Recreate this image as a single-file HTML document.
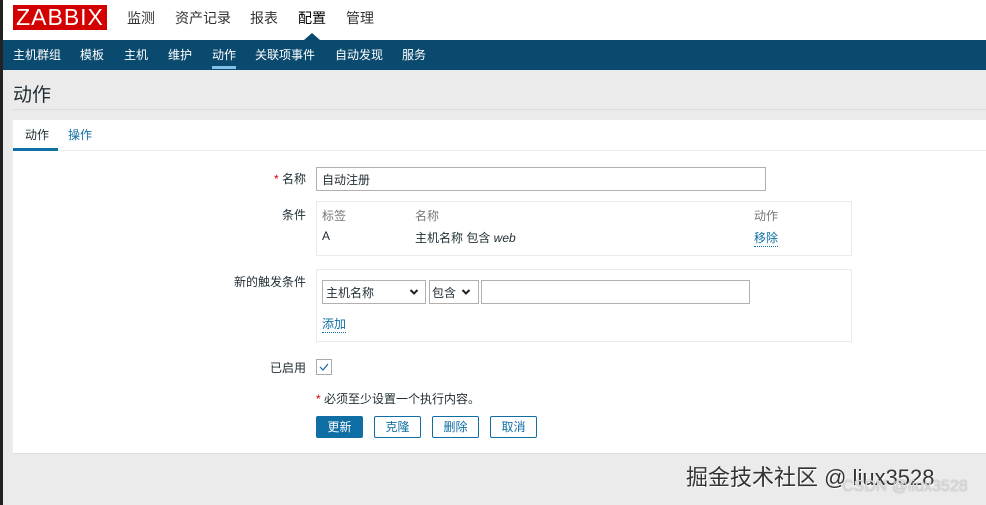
<!DOCTYPE html>
<html><head><meta charset="utf-8"><style>
*{box-sizing:border-box;margin:0;padding:0}
body{width:986px;height:505px;overflow:hidden;background:#ebebeb;font-family:"Liberation Sans","Noto Sans CJK SC",sans-serif;font-size:12px;color:#1f2c33;position:relative}
.edge{position:absolute;left:0;top:0;width:3px;height:505px;background:#222}
.top{position:absolute;left:3px;top:0;width:983px;height:40px;background:#fff}
.logo{position:absolute;left:13px;top:5px;width:94px;height:25px;background:#d40000;color:#fff;font-size:23px;line-height:25px;text-align:center;letter-spacing:1px}
.mm{position:absolute;top:8px;font-size:14px;color:#333}
.nav{position:absolute;left:3px;top:40px;width:983px;height:30px;background:#0b4a6f}
.nav span{position:absolute;top:6px;color:#fff;font-size:12px}
.tri{position:absolute;left:304px;top:33px;width:0;height:0;border-left:8px solid transparent;border-right:8px solid transparent;border-bottom:7px solid #0b4a6f}
.h1{position:absolute;left:13px;top:80px;font-size:19px;color:#1f2c33}
.hl{position:absolute;left:13px;top:109px;width:973px;height:1px;background:#dcdcdc}
.box{position:absolute;left:13px;top:120px;width:973px;height:334px;background:#fff;border-bottom:1px solid #dcdcdc}
.tab{position:absolute;top:126px;font-size:12px}
.lbl{position:absolute;font-size:12px;right:680px;text-align:right}
.inp{position:absolute;border:1px solid #b0b0b0;background:#fff}
.grp{position:absolute;border:1px solid #ebebeb}
.t{position:absolute;font-size:12px}
.lnk{color:#0f6ea3;border-bottom:1px dotted #0f6ea3}
.btn{position:absolute;top:416px;height:22px;border:1px solid #0f6ea3;border-radius:2px;color:#0f6ea3;text-align:center;line-height:20px;font-size:12px;background:#fff}
.chev{position:absolute}
</style></head><body>
<div class="edge"></div>
<div class="top"></div>
<div class="logo">ZABBIX</div>
<span class="mm" style="left:127px">监测</span>
<span class="mm" style="left:175px">资产记录</span>
<span class="mm" style="left:250px">报表</span>
<span class="mm" style="left:298px;color:#000">配置</span>
<span class="mm" style="left:346px">管理</span>
<div class="tri"></div>
<div class="nav">
<span style="left:10px">主机群组</span><span style="left:77px">模板</span><span style="left:121px">主机</span><span style="left:165px">维护</span><span style="left:209px">动作</span><span style="left:252px">关联项事件</span><span style="left:332px">自动发现</span><span style="left:399px">服务</span>
<div style="position:absolute;left:209px;top:26px;width:24px;height:3px;background:#7fc1ea"></div>
</div>
<div class="h1">动作</div>
<div class="hl"></div>
<div class="box">
<div style="position:absolute;left:0;top:30px;width:973px;height:1px;background:#ebebeb"></div>
<div style="position:absolute;left:0;top:28px;width:45px;height:3px;background:#0f6ea3"></div>
</div>
<span class="tab" style="left:25px">动作</span>
<span class="tab" style="left:68px;color:#0f6ea3">操作</span>

<span class="lbl" style="top:170px"><span style="color:#d40000">*</span> 名称</span>
<div class="inp" style="left:316px;top:167px;width:450px;height:24px"></div>
<span class="t" style="left:322px;top:171px">自动注册</span>

<span class="lbl" style="top:206px">条件</span>
<div class="grp" style="left:316px;top:201px;width:536px;height:55px"></div>
<span class="t" style="left:322px;top:207px;color:#777">标签</span>
<span class="t" style="left:415px;top:207px;color:#777">名称</span>
<span class="t" style="left:754px;top:207px;color:#777">动作</span>
<span class="t" style="left:322px;top:229px">A</span>
<span class="t" style="left:415px;top:229px">主机名称 包含 <i>web</i></span>
<span class="t lnk" style="left:754px;top:229px">移除</span>

<span class="lbl" style="top:273px">新的触发条件</span>
<div class="grp" style="left:316px;top:269px;width:536px;height:73px"></div>
<div class="inp" style="left:322px;top:280px;width:104px;height:24px"></div>
<span class="t" style="left:326px;top:284px">主机名称</span>
<svg class="chev" style="left:409px;top:288px" width="10" height="8"><path d="M1.5 2 L5 5.5 L8.5 2" stroke="#222" stroke-width="2" fill="none"/></svg>
<div class="inp" style="left:429px;top:280px;width:50px;height:24px"></div>
<span class="t" style="left:432px;top:284px">包含</span>
<svg class="chev" style="left:461px;top:288px" width="10" height="8"><path d="M1.5 2 L5 5.5 L8.5 2" stroke="#222" stroke-width="2" fill="none"/></svg>
<div class="inp" style="left:481px;top:280px;width:269px;height:24px"></div>
<span class="t lnk" style="left:322px;top:315px">添加</span>

<span class="lbl" style="top:359px">已启用</span>
<div class="inp" style="left:316px;top:359px;width:16px;height:16px;border-color:#aaa"><svg width="14" height="14" viewBox="0 0 14 14"><path d="M3 7 L6 10 L11 4" stroke="#0f6ea3" stroke-width="1.2" fill="none"/></svg></div>

<span class="t" style="left:316px;top:390px"><span style="color:#d40000">*</span> 必须至少设置一个执行内容。</span>
<div class="btn" style="left:316px;width:47px;background:#0f6ea3;color:#fff">更新</div>
<div class="btn" style="left:374px;width:47px">克隆</div>
<div class="btn" style="left:432px;width:47px">删除</div>
<div class="btn" style="left:490px;width:47px">取消</div>

<div style="position:absolute;left:686px;top:460px;font-size:22px;color:#333;text-shadow:1px 1px 0 #fff">掘金技术社区 @ liux3528</div>
<div style="position:absolute;left:842px;top:478px;font-size:16px;color:#ddd;text-shadow:0 0 1px #888">CSDN @liux3528</div>
</body></html>
